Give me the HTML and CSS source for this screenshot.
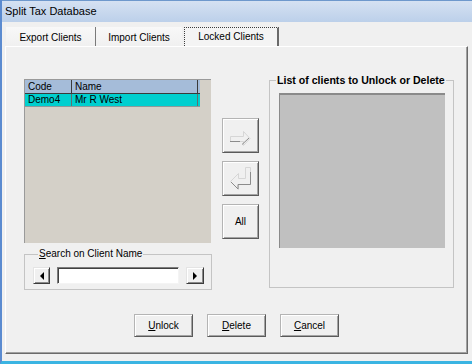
FILE: index.html
```html
<!DOCTYPE html>
<html>
<head>
<meta charset="utf-8">
<link rel="stylesheet" href="styles.css">
</head>
<body>
<div class="window">
  <div class="titlebar">Split Tax Database</div>
  <div class="tabs">
    <div class="tab tab-export">Export Clients</div>
    <div class="tab tab-import">Import Clients</div>
    <div class="tab tab-active">Locked Clients</div>
  </div>
  <div class="panel">
    <div class="main">
      <div class="leftcol">
        <div class="listbox">
          <div class="lrow lhead">
            <div class="c1">Code</div>
            <div class="c2">Name</div>
          </div>
          <div class="lrow lsel">
            <div class="c1">Demo4</div>
            <div class="c2">Mr R West</div>
          </div>
        </div>
        <fieldset class="group search">
          <legend><u>S</u>earch on Client Name</legend>
          <div class="searchrow">
            <div class="sbtn"><span class="tri-left"></span></div>
            <div class="textbox"></div>
            <div class="sbtn"><span class="tri-right"></span></div>
          </div>
        </fieldset>
      </div>
      <div class="midcol">
        <div class="btn sq">
          <svg width="35" height="33" viewBox="0 0 35 33">
            <polygon points="7.5,17.5 20.5,17.5 20.5,12.5 27,19.5 20.5,26.5 20.5,22.5 7.5,22.5" fill="none" stroke="#d6d6d6" stroke-width="1"/>
            <polyline points="7,22.5 17,22.5" fill="none" stroke="#8c8c8c" stroke-width="1"/>
            <polyline points="19,25.5 26,19" fill="none" stroke="#8c8c8c" stroke-width="1"/>
          </svg>
        </div>
        <div class="btn sq">
          <svg width="35" height="33" viewBox="0 0 35 33">
            <polygon points="7.5,19.5 15.5,11.5 15.5,16.5 22.5,16.5 22.5,5.5 27.5,5.5 27.5,22.5 15.5,22.5 15.5,27.5" fill="none" stroke="#d6d6d6" stroke-width="1"/>
            <polyline points="8,20 15,27 15,22.5 27.5,22.5 27.5,10" fill="none" stroke="#8c8c8c" stroke-width="1"/>
          </svg>
        </div>
        <div class="btn sq">All</div>
      </div>
      <fieldset class="group unlock">
        <legend>List of clients to Unlock or Delete</legend>
        <div class="graybox"></div>
      </fieldset>
    </div>
    <div class="actions">
      <div class="btn act"><u>U</u>nlock</div>
      <div class="btn act"><u>D</u>elete</div>
      <div class="btn act"><u>C</u>ancel</div>
    </div>
  </div>
</div>
</body>
</html>
```
FILE: styles.css
```css
html, body {
  margin: 0;
  padding: 0;
}
body {
  width: 472px;
  height: 364px;
  overflow: hidden;
  background: #f0f0f0;
  font-family: "Liberation Sans", Arial, sans-serif;
  font-size: 10px;
  color: #000;
}
.window {
  width: 472px;
  height: 364px;
  box-sizing: border-box;
  border-left: 2px solid #5b8bd0;
  border-bottom: 3px solid #3ab4e2;
  background: #f0f0f0;
  display: flex;
  flex-direction: column;
}
.titlebar {
  height: 21px;
  border-top: 1px solid #6e98cc;
  background: linear-gradient(to bottom, #d5e1f2, #bcd0ea);
  padding-left: 3px;
  line-height: 21px;
  font-size: 11px;
  color: #000;
}
.tabs {
  display: flex;
  margin-top: 5px;
  padding-left: 4px;
  height: 19px;
}
.tab {
  height: 19px;
  box-sizing: border-box;
  display: flex;
  align-items: center;
  justify-content: center;
  background: linear-gradient(to bottom, #f8f8f8, #f0f0f0);
}
.tab-export {
  width: 90px;
  border-right: 1px solid #7a7a7a;
  box-shadow: 1px 0 0 #ffffff;
  padding-top: 2px;
}
.tab-import {
  width: 86px;
  padding-top: 2px;
}
.tab-active {
  width: 95px;
  margin-left: 2px;
  border: 1px dotted #3c3c3c;
  border-right: 2px solid #6a6a6a;
  border-bottom: none;
  background: #f4f4f4;
  padding-bottom: 1px;
}
.panel {
  margin-left: 3px;
  width: 463px;
  height: 308px;
  box-sizing: border-box;
  border-top: 1px solid #ffffff;
  border-left: 1px solid #ffffff;
  border-right: 1px solid #6a6a6a;
  border-bottom: 1px solid #6a6a6a;
  box-shadow: inset -1px -1px 0 #a0a0a0;
  background: #f0f0f0;
  display: flex;
  flex-direction: column;
}
.main {
  display: flex;
  align-items: flex-start;
  padding-left: 18px;
}
.leftcol {
  width: 188px;
  margin-top: 32px;
}
.listbox {
  width: 187px;
  height: 164px;
  box-sizing: border-box;
  background: #d4d0c8;
  border-top: 1px solid #9a9a9a;
  border-left: 1px solid #9a9a9a;
}
.lrow {
  display: flex;
  width: 175px;
}
.lrow .c1 {
  width: 47px;
  padding-left: 3px;
  box-sizing: border-box;
  border-right: 1px solid #3a3a3a;
}
.lrow .c2 {
  width: 126px;
  padding-left: 3px;
  box-sizing: border-box;
  border-right: 1px solid #3a3a3a;
}
.lhead {
  height: 14px;
  line-height: 13px;
  background: #a5bcd9;
  border-bottom: 1px solid #3a3a3a;
  box-sizing: border-box;
}
.lsel {
  height: 13px;
  line-height: 12px;
  background: #00cfcf;
  border-bottom: 1px solid #8c9a9a;
  box-sizing: border-box;
}
.lsel .c1, .lsel .c2 {
  border-right-color: #607070;
}
.group {
  margin: 0;
  padding: 0;
  border: 1px solid #c4c4c4;
  box-sizing: border-box;
  min-width: 0;
}
.group legend {
  padding: 0 1px;
  margin-left: 5px;
  height: 12px;
  line-height: 12px;
  white-space: nowrap;
}
.search {
  width: 188px;
  margin-top: 5px;
  padding: 7px 0 5px 8px;
}
.searchrow {
  display: flex;
  align-items: center;
  height: 17px;
}
.sbtn {
  width: 17px;
  height: 17px;
  box-sizing: border-box;
  border: 1px solid;
  border-color: #e4e4e4 #3c3c3c #3c3c3c #e4e4e4;
  box-shadow: inset 1px 1px 0 #ffffff, inset -1px -1px 0 #8a8a8a;
  background: #f0f0f0;
  display: flex;
  align-items: center;
  justify-content: center;
}
.sbtn + .textbox {
  margin-left: 7px;
}
.textbox + .sbtn {
  margin-left: 7px;
  width: 18px;
}
.tri-left {
  width: 0;
  height: 0;
  border-top: 4px solid transparent;
  border-bottom: 4px solid transparent;
  border-right: 4px solid #000;
}
.tri-right {
  width: 0;
  height: 0;
  border-top: 4px solid transparent;
  border-bottom: 4px solid transparent;
  border-left: 4px solid #000;
}
.textbox {
  width: 122px;
  height: 17px;
  box-sizing: border-box;
  border: 1px solid;
  border-color: #7c7c7c #f4f4f4 #f4f4f4 #7c7c7c;
  box-shadow: inset 1px 1px 0 #404040;
  background: #ffffff;
}
.midcol {
  margin-left: 10px;
  margin-top: 71px;
  display: flex;
  flex-direction: column;
  gap: 8px;
}
.btn {
  box-sizing: border-box;
  border: 1px solid #b4b4b4;
  border-right-color: #5a5a5a;
  border-bottom-color: #5a5a5a;
  box-shadow: inset 1px 1px 0 #ffffff, inset -1px -1px 0 #a4a4a4;
  background: #f0f0f0;
  display: flex;
  align-items: center;
  justify-content: center;
}
.btn svg {
  display: block;
}
.sq {
  width: 37px;
  height: 35px;
}
.unlock {
  margin-left: 10px;
  margin-top: 27px;
  width: 185px;
  padding: 7px 0 39px 9px;
}
.unlock legend {
  font-weight: bold;
  font-size: 10.6px;
  margin-left: -3px;
}
.graybox {
  width: 166px;
  height: 155px;
  box-sizing: border-box;
  background: #c0c0c0;
  border-top: 2px solid #8a8a8a;
  border-left: 1px solid #8a8a8a;
}
.actions {
  display: flex;
  gap: 14px;
  padding-left: 128px;
  margin-top: 24px;
}
.act {
  width: 59px;
  height: 23px;
}
```
